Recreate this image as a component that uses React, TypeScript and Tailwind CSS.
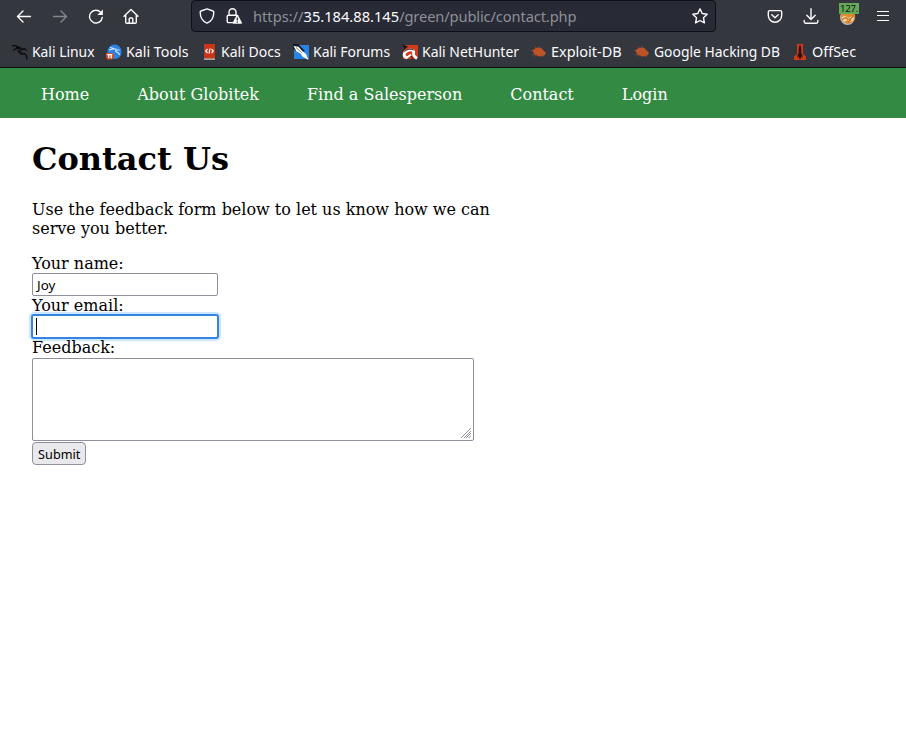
import type { ReactNode } from 'react';

const stroke = {
  fill: 'none',
  stroke: '#fbfbfe',
  strokeWidth: 1.4,
  strokeLinecap: 'round' as const,
  strokeLinejoin: 'round' as const,
};

function Icon({ children, className = '' }: { children: ReactNode; className?: string }) {
  return (
    <svg viewBox="0 0 16 16" className={`block h-4 w-4 shrink-0 ${className}`}>
      {children}
    </svg>
  );
}

const BackIcon = () => (
  <Icon>
    <path {...stroke} d="M14.500 8.500H1.500M7 3L1.500 8.500L7 14" />
  </Icon>
);
const ForwardIcon = () => (
  <Icon className="opacity-40">
    <path {...stroke} d="M1.500 8.500h13M9 3L14.500 8.500L9 14" />
  </Icon>
);
const ReloadIcon = () => (
  <Icon>
    <path {...stroke} d="M12.800 4.400A6.400 6.400 0 1 0 14.300 9.400" />
    <path fill="#fbfbfe" d="M14.900 1.500v5a.6.6 0 0 1-.6.6H9.300z" />
  </Icon>
);
const HomeIcon = () => (
  <Icon className="-ml-px">
    <path {...stroke} d="M1 8.300L8 1.500L15 8.300M2.700 7.100V14.200q0 1 1 1h8.600q1 0 1-1V7.100M6.200 15v-4q0-1 1-1h1.600q1 0 1 1v4" />
  </Icon>
);
const ShieldIcon = () => (
  <Icon>
    <path {...stroke} d="M8 .9L14 3q.8.300.8 1.100C14.800 9.500 12.500 13.500 8 15.200C3.500 13.500 1.200 9.500 1.200 4.100Q1.200 3.300 2 3z" />
  </Icon>
);
const LockIcon = () => (
  <Icon>
    <path {...stroke} d="M6.500 14.600H2.500q-1.300 0-1.300-1.300V8.500q0-1.300 1.300-1.300h8.300M3 7V4.300a3.500 3.500 0 0 1 7 0V7" />
    <path fill="#fbfbfe" d="M10.600 7.200q.7-1.100 1.400 0l3.900 7.300q.4 1.200-.8 1.300H7.500q-1.200-.1-.7-1.300z" />
    <path stroke="#282a35" strokeWidth="1.300" d="M11.300 9.500v3M11.300 13.500v1.200" />
  </Icon>
);
const StarIcon = () => (
  <Icon>
    <path {...stroke} d="M8 .9l2.200 4.600 5 .7-3.700 3.600.9 5.100L8 12.500l-4.400 2.400.9-5.100L.8 6.200l5-.7z" />
  </Icon>
);
const PocketIcon = () => (
  <Icon>
    <path {...stroke} d="M2.700 2.600h10.600q1.400 0 1.400 1.400v3.600a6.700 6.700 0 0 1-13.400 0V4q0-1.400 1.400-1.400zM4.800 6.700L8 9.700l3.200-3" />
  </Icon>
);
const DownloadIcon = () => (
  <Icon>
    <path {...stroke} d="M8 .8v10.400M3.800 7.200L8 11.400l4.200-4.200M1.200 12.500v1.300q0 1.400 1.400 1.400h10.800q1.400 0 1.400-1.400v-1.300" />
  </Icon>
);
const MenuIcon = () => (
  <Icon>
    <path stroke="#fbfbfe" strokeWidth="1.200" d="M2 3.500h12M2 7.500h12M2 12.500h12" />
  </Icon>
);

function ProxyIcon() {
  return (
    <div className="relative h-6 w-5">
      <svg viewBox="0 0 20 24" className="block h-6 w-5">
        <circle cx="8.500" cy="14.500" r="7.500" fill="#b5b7ba" />
        <circle cx="9" cy="13.500" r="7.200" fill="#e18b2f" />
        <path fill="#f6d7a9" d="M2.500 14l4-1 3 2 4-2 2 1-2 4-3 1-2-2-3 2-2-2z" />
        <path fill="none" stroke="#c26f20" strokeWidth="1.300" d="M3 16.500l4-2 2 2 3-1 3-3M9 19.500l3-3" />
      </svg>
      <span className="absolute left-0 top-0 flex h-[11px] w-5 items-center bg-[#65a958] pl-px font-['Noto_Sans'] text-[9.5px] leading-[11px] tracking-[-0.2px] text-[#101010]">
        127.
      </span>
    </div>
  );
}

const KaliLinuxIcon = () => (
  <Icon>
    <path fill="none" stroke="#0b0c0e" strokeWidth="1.300" d="M0 1.500l4 .3L8.500 4M1 6.500l4-2.500 3 0M13.500 5.300H10q-2.700.3-1.500 2.700 1 1.700 3.500 1.700 2 .5 2.500 2.800l.7 3" />
    <path fill="#0b0c0e" d="M4 2l5 1.500 1 2.500-2-.8-4-.7zM5 5l2 1.500 1.500 3 4 1.500-4-.2L6 8zM10 4l4 .8 1.500 2-3-.7-2 .2z" />
  </Icon>
);
const KaliToolsIcon = () => (
  <Icon>
    <circle cx="8.500" cy="7.800" r="7.200" fill="#2b82e5" />
    <path fill="none" stroke="#d9ecff" strokeWidth="1.100" d="M4 3.500l4 1M3 6l5-1.300 2.500.6M13.500 6H10.500q-1.500.5-.5 1.700 3 .5 3.500 3.300" />
    <path fill="#d84b20" d="M0 9h7.500v4.500L6 15.500H1.500L0 13.500z" />
    <path fill="none" stroke="#fff" strokeWidth="1.300" d="M1.200 10.700h5M2.700 11v3.300M5.200 11v3.300" />
  </Icon>
);
const KaliDocsIcon = () => (
  <Icon>
    <path fill="#123e5b" d="M2 .8h1.500v14H2z" />
    <path fill="#cb3517" d="M3 0h11v14.500H3z" />
    <path fill="#d9d4cf" d="M3 14.500h11v1.200H3z" />
    <path fill="none" stroke="#fff" strokeWidth="1.200" d="M6.500 5L4.700 7l1.800 2M8 9.500l1-5M10.500 5l1.800 2-1.800 2" />
  </Icon>
);
const KaliForumsIcon = () => (
  <Icon>
    <path fill="#2b82e5" d="M1 1h15v14H1z" />
    <path fill="#121722" d="M0 0h5l7 7-7 2L0 4z" />
    <path fill="#fff" d="M.5 2l5 .8 4 4.500 3.500 2.700 2.500 6-6-3.500-2-3L3.800 8z" />
    <path stroke="#526072" strokeWidth=".8" d="M3 3.500l5.500 5" />
  </Icon>
);
const NetHunterIcon = () => (
  <Icon>
    <path fill="#d33a1c" d="M3 1h13v12l-5 2H1V6z" />
    <path fill="#15171c" d="M0 0l3 1.500L6 2.500 3 5 0 8l2-4z" />
    <path fill="none" stroke="#fff" strokeWidth="2.800" d="M5.500 14C1 13 1 9 5 7c4-2.300 7.500-.5 6.500 2.500-.4 2 1 3.200 3.500 5" />
    <path fill="none" stroke="#fff" strokeWidth="1.800" d="M5 13.500l4-3" />
    <path fill="none" stroke="#191a1e" strokeWidth="1" d="M2.500 7.500Q7 3.500 11.500 6M9 12l2 3" />
  </Icon>
);
const BugIcon = () => (
  <Icon>
    <path fill="#bd5427" d="M1.500 6.500l3-2.500 3.500-.5 3 1 2 2.500 1.800 1.500-.8 2.500-3 1.200-4-.2-3.500-1.500z" />
    <path fill="none" stroke="#a54b27" strokeWidth=".8" d="M0 6.500l2 .5M1 11l3-1M4 2.500l1 1.700M8.500 2.500v1.500M3.500 12.700l2-2M8 13l.3-1M12 13l-1-1.500" />
  </Icon>
);
const OffSecIcon = () => (
  <Icon>
    <path fill="#d33a1c" d="M5 0h6v10l3 2.500V16H2v-3.500L5 10z" />
    <path fill="#2b1212" d="M7 1.500h2l.4 8 1.100 1.200v3L8.800 12.500V15H7.200v-2.500l-1.700 1.200v-3l1.100-1.200z" />
  </Icon>
);

const bookmarks = [
  { label: 'Kali Linux', icon: <KaliLinuxIcon />, width: 'w-[94px]', scale: 'scale-x-[0.925]' },
  { label: 'Kali Tools', icon: <KaliToolsIcon />, width: 'w-[95px]', scale: 'scale-x-[0.95]' },
  { label: 'Kali Docs', icon: <KaliDocsIcon />, width: 'w-[92px]', scale: 'scale-x-[0.935]' },
  { label: 'Kali Forums', icon: <KaliForumsIcon />, width: 'w-[109px]', scale: 'scale-x-[0.93]' },
  { label: 'Kali NetHunter', icon: <NetHunterIcon />, width: 'w-[129px]', scale: 'scale-x-[0.93]' },
  { label: 'Exploit-DB', icon: <BugIcon />, width: 'w-[103px]', scale: 'scale-x-[0.965]' },
  { label: 'Google Hacking DB', icon: <BugIcon />, width: 'w-[158px]', scale: 'scale-x-[0.925]' },
  { label: 'OffSec', icon: <OffSecIcon />, width: 'w-[70px]', scale: 'scale-x-[0.96]' },
];

function BrowserChrome() {
  return (
    <header className="h-[68px] border-b border-[#0c0c12] bg-[#35373f] font-['Noto_Sans',sans-serif] text-[#fbfbfe]">
      <div className="flex h-8 items-center pl-4">
        <div className="flex w-[175px] gap-5">
          <BackIcon />
          <ForwardIcon />
          <ReloadIcon />
          <HomeIcon />
        </div>
        <div className="flex h-8 w-[525px] items-center rounded border border-[#0f1016] bg-[#282a35] pl-[7px] pr-[7px]">
          <ShieldIcon />
          <div className="ml-[11px]"><LockIcon /></div>
          <div className="ml-[11px] flex-1 whitespace-nowrap text-[14.67px] leading-5 text-[#8f9097]">
            https://<span className="text-[#fbfbfe]">35.184.88.145</span><span className="tracking-[-0.12px]">/green/public/contact.php</span>
          </div>
          <StarIcon />
        </div>
        <div className="ml-[51px] flex items-center">
          <PocketIcon />
          <div className="ml-5"><DownloadIcon /></div>
          <div className="-mt-0.5 ml-5"><ProxyIcon /></div>
          <div className="ml-4"><MenuIcon /></div>
        </div>
      </div>
      <nav className="flex h-[35px] items-center pl-3 pt-[5px]">
        {bookmarks.map((b) => (
          <div key={b.label} className={`flex shrink-0 items-center gap-1 whitespace-nowrap text-[15px] leading-5 ${b.width}`}>
            {b.icon}
            <span className={`-mt-0.5 origin-left ${b.scale}`}>{b.label}</span>
          </div>
        ))}
      </nav>
    </header>
  );
}

export default function App() {
  return (
    <div className="h-[737px] overflow-hidden bg-white font-['DejaVu_Serif',serif] text-base leading-[19px] text-black">
      <BrowserChrome />
      <nav className="flex h-[50px] items-center gap-12 bg-[#338a43] pl-[41px] pt-[3px] text-white">
        <a>Home</a>
        <a>About Globitek</a>
        <a>Find a Salesperson</a>
        <a>Contact</a>
        <a>Login</a>
      </nav>
      <main className="w-[506px] pl-8 pt-[22px]">
        <h1 className="text-[32px] font-bold leading-[38px]">Contact Us</h1>
        <p className="mt-[22px]">
          Use the feedback form below to let us know how we can
          <br />
          serve you better.
        </p>
        <form className="mt-4 flex flex-col items-start">
          <label>Your name:</label>
          <div className="flex h-[23px] w-[186px] items-center rounded-[2px] border border-[#8f8f9d] pl-[4px] font-['Noto_Sans',sans-serif] text-[13.33px] leading-[18px]">
            Joy
          </div>
          <label>Your email:</label>
          <div className="-ml-px -mt-px flex h-[25px] w-[188px] items-center rounded-[3px] border-2 border-[#3584e4] bg-white pl-[3px] shadow-[0_0_0_2px_#cce6fd]">
            <span className="h-[17px] w-px bg-black" />
          </div>
          <label className="-mt-px">Feedback:</label>
          <div className="mt-px flex h-[83px] w-[442px] items-end justify-end rounded-[2px] border border-[#8f8f9d] p-[2px]">
            <svg viewBox="0 0 10 10" className="h-2.5 w-2.5">
              <path d="M0 10L10 0M3 10l7-7M5 10l5-5M7.500 10L10 7.500" stroke="#808085" strokeWidth=".9" />
            </svg>
          </div>
          <button type="button" className="mt-px flex h-[23px] w-[54px] items-center justify-center rounded border border-[#8f8f9d] bg-[#e9e9ed] font-['Noto_Sans',sans-serif] text-[13.33px] leading-[18px]">
            <span className="scale-x-[0.95]">Submit</span>
          </button>
        </form>
      </main>
    </div>
  );
}
